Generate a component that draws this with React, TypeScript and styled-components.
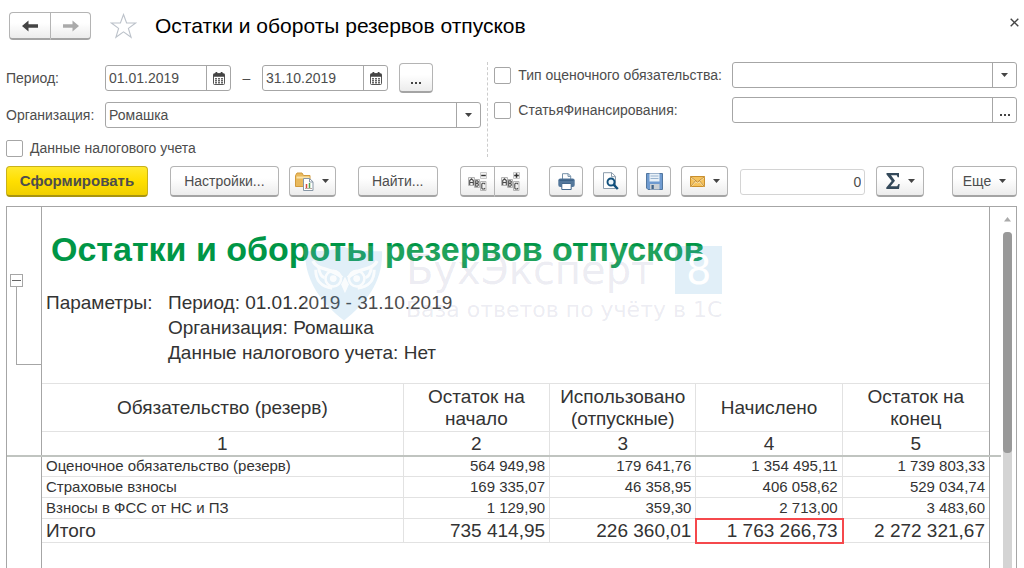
import React from "react";
import styled, { createGlobalStyle, css } from "styled-components";

const GlobalStyle = createGlobalStyle`
  *, *::before, *::after { box-sizing: border-box; }
  body { margin: 0; background: #fff; color: #4d4d4d; font: 14px/20px "Liberation Sans", Arial, sans-serif; }
  button, input, select { font: inherit; color: inherit; margin: 0; }
`;

const line = "#a6a6a6";

const Page = styled.div`
  display: flex;
  flex-direction: column;
  min-height: 100vh;
  padding: 0 7px 0 6px;
`;

/* ---------- Header ---------- */

const TitleBar = styled.header`
  display: flex;
  align-items: center;
  height: 52px;
  padding-left: 3px;
`;

const raised = css`
  display: flex;
  align-items: center;
  justify-content: center;
  padding: 0;
  background: linear-gradient(#fff 40%, #ececec);
  border: 1px solid #b4b4b4;
  border-bottom: 2px solid #a4a4a4;
  border-radius: 4px;
`;

const ButtonGroup = styled.div`
  display: flex;
  & > button:not(:last-child) { border-top-right-radius: 0; border-bottom-right-radius: 0; border-right: 0; }
  & > button:not(:first-child) { border-top-left-radius: 0; border-bottom-left-radius: 0; }
`;

const NavButton = styled.button`
  ${raised}
  width: 41px;
  height: 28px;
`;

const PlainButton = styled.button`
  display: flex;
  align-items: center;
  justify-content: center;
  padding: 0;
  border: 0;
  background: none;
`;

const StarButton = styled(PlainButton)`
  margin: 0 18px 0 19px;
`;

const CloseButton = styled(PlainButton)`
  width: 20px;
  height: 20px;
  margin: -8px -7px 0 0;
`;

const Heading = styled.h1`
  flex: 1;
  margin: 0;
  color: #000;
  font-size: 21px;
  line-height: 26px;
  font-weight: 400;
`;

/* ---------- Filters ---------- */

const Filters = styled.form`
  display: flex;
  padding-top: 10px;
`;

const FilterColumn = styled.div<{ $grow: number; $gap: number }>`
  flex: ${(p) => p.$grow} 1 0;
  min-width: 0;
  display: flex;
  flex-direction: column;
  gap: ${(p) => p.$gap}px;
`;

const LeftColumn = styled(FilterColumn)`
  padding-top: 3px;
  padding-right: 6px;
`;

const RightColumn = styled(FilterColumn)`
  padding-left: 6px;
  border-left: 1px dashed #ccc;
`;

const FieldRow = styled.div<{ $label: number }>`
  display: grid;
  grid-template-columns: ${(p) => p.$label}px minmax(0, 1fr);
  align-items: center;
`;

const Period = styled.div`
  display: flex;
  align-items: center;
`;

const Dash = styled.span`
  width: 31px;
  text-align: center;
`;

const Box = styled.div`
  display: flex;
  height: 26px;
  border: 1px solid ${line};
  border-radius: 3px;
  background: #fff;
  overflow: hidden;
`;

const DateBox = styled(Box)`
  width: 126px;
`;

const BoxInput = styled.input`
  flex: 1;
  min-width: 0;
  padding: 0 3px;
  border: 0;
  background: none;
`;

const BoxButton = styled(PlainButton)<{ $low?: boolean }>`
  width: 24px;
  border-left: 1px solid ${line};
  align-items: ${(p) => (p.$low ? "flex-end" : "center")};
  padding-bottom: ${(p) => (p.$low ? 6 : 0)}px;
`;

const SelectBox = styled(Box)`
  display: grid;
  grid-template-columns: minmax(0, 1fr) 24px;
  & > select {
    grid-area: 1 / 1 / 2 / 3;
    appearance: none;
    border: 0;
    padding: 0 28px 0 3px;
    background: none;
  }
`;

const SelectArrow = styled.span`
  grid-area: 1 / 2;
  display: flex;
  align-items: center;
  justify-content: center;
  border-left: 1px solid ${line};
  pointer-events: none;
`;

const MoreButton = styled.button`
  ${raised}
  width: 34px;
  height: 30px;
  margin: -2px 0 -2px 11px;
  align-items: flex-end;
  padding-bottom: 7px;
`;

const Check = styled.label`
  display: flex;
  align-items: center;
  gap: 7px;
  height: 18px;
  white-space: nowrap;
  & > input {
    flex: none;
    appearance: none;
    width: 17px;
    height: 17px;
    border: 1px solid ${line};
    border-radius: 2px;
    background: #fff;
  }
`;

/* ---------- Toolbar ---------- */

const Toolbar = styled.div`
  display: flex;
  align-items: center;
  height: 31px;
  margin: 9px 0;
`;

const Gap = styled.span<{ $w: number }>`
  flex: ${(p) => p.$w} 1 0;
`;

const ToolButton = styled.button<{ $w: number }>`
  ${raised}
  flex: none;
  width: ${(p) => p.$w}px;
  height: 31px;
  gap: 8px;
`;

const PrimaryButton = styled(ToolButton)`
  background: linear-gradient(#ffe92e, #ffdf00 50%, #f0cf00);
  border-color: #c9b21a;
  border-bottom-color: #a89410;
  font-size: 15px;
  font-weight: 700;
`;

const CountInput = styled.input`
  flex: none;
  width: 125px;
  height: 26px;
  padding: 0 3px;
  border: 1px solid #d4d4d4;
  border-radius: 3px;
  text-align: right;
`;

/* ---------- Report ---------- */

const Report = styled.main`
  flex: 1;
  display: flex;
  border: 1px solid ${line};
  border-bottom: 0;
`;

const Gutter = styled.div`
  flex: none;
  width: 35px;
  padding: 67px 0 0 3px;
  border-right: 1px solid ${line};
`;

const GroupToggle = styled(PlainButton)`
  width: 13px;
  height: 13px;
  border: 1px solid ${line};
  background: #fff;
`;

const GroupBracket = styled.div`
  height: 78px;
  margin-left: 6px;
  border: solid ${line};
  border-width: 0 0 1px 1px;
`;

const Sheet = styled.div`
  position: relative;
  flex: 1;
  min-width: 0;
  padding-bottom: 24px;
  color: #333;
`;

const ReportTitle = styled.h2`
  margin: 0;
  padding: 22px 0 0 9px;
  color: #009646;
  font-size: 34px;
  line-height: 40px;
`;

const Params = styled.dl`
  display: grid;
  grid-template-columns: 122px 1fr;
  margin: 21px 0 0 4px;
  font-size: 19px;
  line-height: 25px;
  & > dt, & > dd { margin: 0; }
  & > dd { grid-column: 2; }
`;

const Table = styled.table`
  width: 100%;
  margin-top: 18px;
  table-layout: fixed;
  border-collapse: separate;
  border-spacing: 0;
  border-top: 1px solid #e2e2e2;
  & td, & th {
    padding: 0 4px;
    border-right: 1px solid #e2e2e2;
    border-bottom: 1px solid #e2e2e2;
    font-weight: 400;
  }
  & tr > :last-child { border-right: 0; }
`;

const Head = styled.thead`
  position: relative;
  font-size: 19px;
  line-height: 22px;
  &::after {
    content: "";
    position: absolute;
    left: -35px;
    right: -12px;
    bottom: -1px;
    height: 2px;
    background: #c0c4c0;
  }
`;

const HeadRow = styled.tr<{ $h: number }>`
  height: ${(p) => p.$h}px;
`;

const Row = styled.tr<{ $total?: boolean }>`
  height: ${(p) => (p.$total ? 24 : 21)}px;
  font-size: ${(p) => (p.$total ? 19 : 15)}px;
  line-height: ${(p) => (p.$total ? 23 : 20)}px;
  & > th { text-align: left; }
  & > td { text-align: right; }
`;

const NumCell = styled.td<{ $marked?: boolean }>`
  ${(p) => p.$marked && "outline: 2px solid #f5484c; outline-offset: -1px;"}
`;

const Watermark = styled.div`
  position: absolute;
  left: 262px;
  top: 39px;
  display: flex;
  background: rgba(255, 255, 255, 0.12);
  font-family: "DejaVu Sans", Inter, sans-serif;
  color: rgba(70, 70, 130, 0.11);
  pointer-events: none;
`;

const WatermarkText = styled.div`
  display: flex;
  flex-direction: column;
  margin-left: 22px;
  white-space: nowrap;
`;

const Brand = styled.div`
  display: flex;
  align-items: center;
  justify-content: space-between;
  gap: 16px;
  height: 48px;
  font-size: 40px;
`;

const Eight = styled.span`
  display: flex;
  align-items: center;
  justify-content: center;
  width: 47px;
  height: 48px;
  background: rgba(40, 140, 205, 0.14);
  color: #fff;
`;

const Tagline = styled.div`
  margin-top: 4px;
  font-size: 22px;
  line-height: 24px;
`;

const Scroll = styled.div`
  flex: none;
  display: flex;
  flex-direction: column;
  align-items: center;
  width: 27px;
  padding: 10px 0 0 9px;
  border-left: 1px solid ${line};
`;

const Track = styled.div`
  flex: 1;
  width: 9px;
  margin-top: 10px;
  border-radius: 4px 4px 0 0;
  background: #d4d4d4;
`;

const Thumb = styled.div`
  height: 221px;
  border-radius: 4px;
  background: #999;
`;

/* ---------- Icons ---------- */

const Arrow = ({ color, flip }: { color: string; flip?: boolean }) => (
  <svg width="16" height="12" viewBox="0 0 16 12" fill={color}>
    <path d={flip ? "M16 6 9.500.5v3.800H0v3.400h9.500v3.800z" : "M0 6 6.500.5v3.800H16v3.400H6.500v3.800z"} />
  </svg>
);

const Caret = () => (
  <svg width="7" height="4" viewBox="0 0 7 4" fill="#444"><path d="M0 0h7L3.500 4z" /></svg>
);

const Star = () => (
  <svg width="27" height="26" viewBox="0 0 27 26" fill="#fff" stroke="#bcc2ca" strokeWidth="1.100">
    <path d="M13.500 1.500 16.600 10h9l-7.200 5.400 2.700 8.900-7.600-5.400-7.600 5.400 2.700-8.900L1.400 10h9z" />
  </svg>
);

const Calendar = () => (
  <svg width="12" height="13" viewBox="0 0 12 13">
    <path d="M1.500 1.500h9a1 1 0 0 1 1 1v9a1 1 0 0 1-1 1h-9a1 1 0 0 1-1-1v-9a1 1 0 0 1 1-1z" fill="#fff" stroke="#555" />
    <path d="M.5 2h11v2.800H.5zM2.500 0h1.800v3H2.500zM7.700 0h1.800v3H7.700z" fill="#444" />
    <path d="M2 6h2v1.500H2zM5 6h2v1.500H5zM8 6h2v1.500H8zM2 8h2v1.500H2zM5 8h2v1.500H5zM8 8h2v1.500H8zM2 10h2v1.500H2zM5 10h2v1.500H5zM8 10h2v1.500H8z" fill="#666" />
  </svg>
);

const Dots = () => (
  <svg width="10" height="2" viewBox="0 0 10 2" fill="#444"><path d="M0 0h2v2H0zM4 0h2v2H4zM8 0h2v2H8z" /></svg>
);

const Cross = () => (
  <svg width="9" height="9" viewBox="0 0 9 9" stroke="#444" strokeWidth="1.400"><path d="M.7.7l7.600 7.600M8.300.7.7 8.300" /></svg>
);

const FolderIcon = () => (
  <svg width="19" height="19" viewBox="0 0 19 19">
    <path d="M.5 14.500V3.500L2 1h5l1.500 2.500H15v11z" fill="#e9b95c" stroke="#d19a3c" />
    <path d="M1.500 5.500h13" stroke="#fbe3a8" strokeWidth="2" />
    <path d="M8.500 6.500h6l3.500 3.300v8.700H8.500z" fill="#fff" stroke="#8797a6" />
    <path d="M14.500 6.500v3.500H18" fill="none" stroke="#8797a6" />
    <path d="M11.500 16v-4" stroke="#d9483b" strokeWidth="1.500" />
    <path d="M14.500 16v-5" stroke="#4ca64c" strokeWidth="1.500" />
    <path d="M10 16.500h7" stroke="#b9a9a0" />
  </svg>
);

const AbcIcon = ({ plus }: { plus?: boolean }) => (
  <svg width="19" height="19" viewBox="0 0 19 19" fill="none">
    <path d="M.5 5.500h6v8h-6zM6.500 7.500h5v8h-5zM12.500 9.500h5.500v9h-5.500z" fill="#f0f0f0" stroke="#b4b4b4" />
    <path d="M1.700 13V8.500L3.500 6.800l1.800 1.700V13M1.700 10.500h3.600M7.700 8.800h1.800l.9 1-.7 1.500.7 1.700-.9 1.300H7.700zM7.700 11.400h2.200M16.900 12.200l-.5-1h-2l-.6 1v3.800l.6 1h2l.5-1" stroke="#4a4a4a" strokeWidth="1.100" />
    <path d="M12.500.5h6v6h-6z" fill="#f4f4f4" stroke="#c8c8c8" />
    <path d={plus ? "M13.200 3.500h4.600M15.500 1.200v4.600" : "M13.200 3.500h4.600"} stroke="#333" strokeWidth="1.400" />
  </svg>
);

const PrinterIcon = () => (
  <svg width="17" height="17" viewBox="0 0 17 17">
    <path d="M4.500 6V.7h5.800l2.400 2.400V6" fill="#fff" stroke="#7590a8" />
    <path d="M10 .7v2.700h2.700" fill="none" stroke="#7590a8" />
    <rect x=".3" y="5.500" width="16.400" height="8.500" rx="2" fill="#53779b" />
    <path d="M1.500 7.200h14" stroke="#34597f" />
    <path d="M3.800 10.500h9.400v6H3.800z" fill="#fff" stroke="#44688c" />
  </svg>
);

const PreviewIcon = () => (
  <svg width="17" height="18" viewBox="0 0 17 18">
    <path d="M1.500.7h8.300l3.700 3.700v12.100h-12z" fill="#fff" stroke="#8c9cab" />
    <path d="M9.500.7v4h4" fill="none" stroke="#8c9cab" />
    <circle cx="9" cy="10" r="3.500" fill="#eaf4fa" stroke="#0f4f7c" strokeWidth="1.900" />
    <path d="M11.600 12.700 15.800 17" stroke="#0f4f7c" strokeWidth="2.500" />
  </svg>
);

const DiskIcon = () => (
  <svg width="17" height="17" viewBox="0 0 17 17">
    <path d="M.5.5h16v16H2L.5 15z" fill="#6f9bd0" stroke="#52779f" />
    <path d="M3.500.5h10v8h-10z" fill="#e9f1f8" />
    <path d="M4.500 3h8M4.500 5.500h8" stroke="#9ab4cf" />
    <path d="M4 11h9.500v5.500H4z" fill="#c9cfd4" />
    <path d="M5.500 12h2.300v4H5.500z" fill="#42658a" />
  </svg>
);

const MailIcon = () => (
  <svg width="15" height="11" viewBox="0 0 15 11">
    <path d="M.5.5h14v10H.5z" fill="#f5c25c" stroke="#c98f2e" />
    <path d="M1 1.300 7.500 6.800 14 1.300M1 10l4.800-4.700M14 10 9.200 5.300" fill="none" stroke="#fdeec4" strokeWidth="1.200" />
    <path d="M.8.8 7.500 6.200 14.200.8M.8 10.200l4.700-5.400M14.200 10.200 9.500 4.800" fill="none" stroke="#b97f24" strokeWidth=".9" />
  </svg>
);

const SigmaIcon = () => (
  <svg width="14" height="16" viewBox="0 0 14 16">
    <path d="M.5 0h12.500v4.200h-1.300L10.800 2.200H5l4 5.500-4.500 5.600h6.700l1.300-2.300h1.200L13 16H.3v-1.500L5.700 8 .5 1.500z" fill="#34495a" />
  </svg>
);

const OwlShield = () => (
  <svg width="80" height="75" viewBox="0 0 82 76">
    <path d="M1 5C15 5 28 5 40 0 52 5 66 5 80 5 81 36 64 58 41 76 18 58 1 36 1 5z" fill="rgba(40,140,205,.14)" />
    <g fill="none" stroke="#fff" opacity=".85">
      <circle cx="30" cy="33" r="8" strokeWidth="2.600" />
      <circle cx="54" cy="33" r="8" strokeWidth="2.600" />
      <path d="M9 15c5 10 18 6 30 17M75 15c-5 10-18 6-30 17" strokeWidth="3.500" />
      <path d="M12 24c0 10 4 17 17 19M72 24c0 10-4 17-17 19M15 22c1 6 3 9 6 10M69 22c-1 6-3 9-6 10" strokeWidth="3" />
    </g>
    <g fill="#fff" opacity=".85">
      <circle cx="30" cy="33" r="3.500" />
      <circle cx="54" cy="33" r="3.500" />
      <path d="M42 31l4 8-4 9-4-9z" />
    </g>
  </svg>
);

/* ---------- Data ---------- */

const columns = ["Обязательство (резерв)", "Остаток на начало", "Использовано (отпускные)", "Начислено", "Остаток на конец"];

const rows = [
  ["Оценочное обязательство (резерв)", "564 949,98", "179 641,76", "1 354 495,11", "1 739 803,33"],
  ["Страховые взносы", "169 335,07", "46 358,95", "406 058,62", "529 034,74"],
  ["Взносы в ФСС от НС и ПЗ", "1 129,90", "359,30", "2 713,00", "3 483,60"],
];

const totals = ["Итого", "735 414,95", "226 360,01", "1 763 266,73", "2 272 321,67"];

export default function App() {
  return (
    <Page>
      <GlobalStyle />
      <TitleBar>
        <ButtonGroup>
          <NavButton aria-label="Назад"><Arrow color="#444" /></NavButton>
          <NavButton aria-label="Вперед"><Arrow color="#aaa" flip /></NavButton>
        </ButtonGroup>
        <StarButton aria-label="Избранное"><Star /></StarButton>
        <Heading>Остатки и обороты резервов отпусков</Heading>
        <CloseButton aria-label="Закрыть"><Cross /></CloseButton>
      </TitleBar>

      <Filters>
        <LeftColumn $grow={482} $gap={11}>
          <FieldRow $label={99}>
            <label htmlFor="from">Период:</label>
            <Period>
              <DateBox>
                <BoxInput id="from" defaultValue="01.01.2019" />
                <BoxButton type="button" aria-label="Выбрать дату начала"><Calendar /></BoxButton>
              </DateBox>
              <Dash>–</Dash>
              <DateBox>
                <BoxInput aria-label="Конец периода" defaultValue="31.10.2019" />
                <BoxButton type="button" aria-label="Выбрать дату конца"><Calendar /></BoxButton>
              </DateBox>
              <MoreButton type="button" aria-label="Выбрать период"><Dots /></MoreButton>
            </Period>
          </FieldRow>
          <FieldRow $label={99}>
            <label htmlFor="org">Организация:</label>
            <SelectBox>
              <select id="org"><option>Ромашка</option></select>
              <SelectArrow><Caret /></SelectArrow>
            </SelectBox>
          </FieldRow>
          <Check><input type="checkbox" />Данные налогового учета</Check>
        </LeftColumn>
        <RightColumn $grow={530} $gap={9}>
          <FieldRow $label={238}>
            <Check><input type="checkbox" />Тип оценочного обязательства:</Check>
            <SelectBox>
              <select aria-label="Тип оценочного обязательства"><option></option></select>
              <SelectArrow><Caret /></SelectArrow>
            </SelectBox>
          </FieldRow>
          <FieldRow $label={238}>
            <Check><input type="checkbox" />СтатьяФинансирования:</Check>
            <Box>
              <BoxInput aria-label="СтатьяФинансирования" />
              <BoxButton type="button" $low aria-label="Выбрать статью"><Dots /></BoxButton>
            </Box>
          </FieldRow>
        </RightColumn>
      </Filters>

      <Toolbar>
        <PrimaryButton $w={142}>Сформировать</PrimaryButton>
        <Gap $w={22} />
        <ToolButton $w={109}>Настройки...</ToolButton>
        <Gap $w={10} />
        <ToolButton $w={47} aria-label="Варианты отчета"><FolderIcon /><Caret /></ToolButton>
        <Gap $w={22} />
        <ToolButton $w={80}>Найти...</ToolButton>
        <Gap $w={22} />
        <ButtonGroup>
          <ToolButton $w={34} aria-label="Свернуть группы"><AbcIcon /></ToolButton>
          <ToolButton $w={34} aria-label="Развернуть группы"><AbcIcon plus /></ToolButton>
        </ButtonGroup>
        <Gap $w={22} />
        <ToolButton $w={34} aria-label="Печать"><PrinterIcon /></ToolButton>
        <Gap $w={10} />
        <ToolButton $w={34} aria-label="Просмотр"><PreviewIcon /></ToolButton>
        <Gap $w={10} />
        <ToolButton $w={34} aria-label="Сохранить"><DiskIcon /></ToolButton>
        <Gap $w={10} />
        <ToolButton $w={47} aria-label="Отправить"><MailIcon /><Caret /></ToolButton>
        <Gap $w={12} />
        <CountInput aria-label="Сумма" defaultValue="0" />
        <Gap $w={11} />
        <ToolButton $w={48} aria-label="Итоги"><SigmaIcon /><Caret /></ToolButton>
        <Gap $w={28} />
        <ToolButton $w={65}>Еще<Caret /></ToolButton>
      </Toolbar>

      <Report>
        <Gutter>
          <GroupToggle aria-label="Свернуть">
            <svg width="9" height="1" viewBox="0 0 9 1"><path d="M0 0h9v1H0z" fill="#666" /></svg>
          </GroupToggle>
          <GroupBracket />
        </Gutter>
        <Sheet>
          <ReportTitle>Остатки и обороты резервов отпусков</ReportTitle>
          <Params>
            <dt>Параметры:</dt>
            <dd>Период: 01.01.2019 - 31.10.2019</dd>
            <dd>Организация: Ромашка</dd>
            <dd>Данные налогового учета: Нет</dd>
          </Params>
          <Table>
            <colgroup>
              <col style={{ width: "38.200%" }} />
              <col span={4} />
            </colgroup>
            <Head>
              <HeadRow $h={48}>{columns.map((c) => <th key={c} scope="col">{c}</th>)}</HeadRow>
              <HeadRow $h={24}>{columns.map((c, i) => <th key={c}>{i + 1}</th>)}</HeadRow>
            </Head>
            <tbody>
              {rows.map(([name, ...cells]) => (
                <Row key={name}>
                  <th scope="row">{name}</th>
                  {cells.map((c) => <NumCell key={c}>{c}</NumCell>)}
                </Row>
              ))}
              <Row $total>
                <th scope="row">{totals[0]}</th>
                {totals.slice(1).map((c, i) => <NumCell key={c} $marked={i === 2}>{c}</NumCell>)}
              </Row>
            </tbody>
          </Table>
          <Watermark aria-hidden="true">
            <OwlShield />
            <WatermarkText>
              <Brand><span>БухЭксперт</span><Eight>8</Eight></Brand>
              <Tagline>База ответов по учёту в 1С</Tagline>
            </WatermarkText>
          </Watermark>
        </Sheet>
        <Scroll>
          <svg width="7" height="5" viewBox="0 0 7 5" fill="#aaa"><path d="M0 4.500h7L3.500 0z" /></svg>
          <Track><Thumb /></Track>
        </Scroll>
      </Report>
    </Page>
  );
}
